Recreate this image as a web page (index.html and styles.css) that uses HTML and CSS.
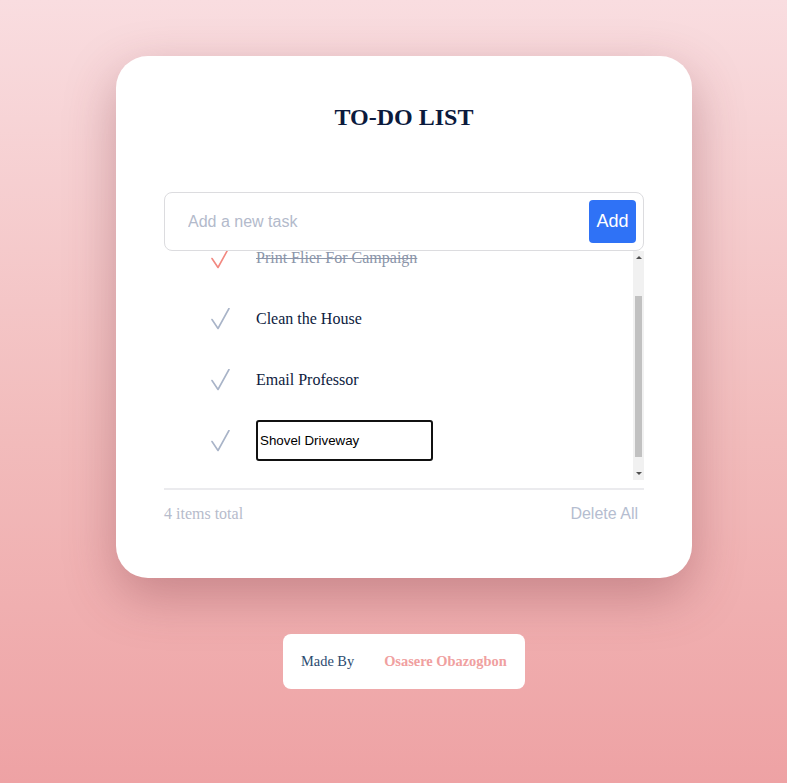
FILE: index.html
```html
<!DOCTYPE html>
<html lang="en">
<head>
<meta charset="utf-8">
<title>To-Do List</title>
<link rel="stylesheet" href="styles.css">
</head>
<body>
<div class="page">
  <main class="card">
    <h1 class="title">TO-DO LIST</h1>
    <form class="add-form">
      <input class="add-input" type="text" placeholder="Add a new task">
      <button class="add-btn" type="button">Add</button>
    </form>
    <div class="list-wrap">
      <ul class="list" id="list">
        <li class="item done">
          <svg class="check" width="20" height="22" viewBox="0 0 20 22"><path d="M2 11.5 L8 20.5 L19 0.5" fill="none" stroke-width="1.6" stroke-linecap="round" stroke-linejoin="round"/></svg>
          <span class="item-text">Print Flier For Campaign</span>
        </li>
        <li class="item">
          <svg class="check" width="20" height="22" viewBox="0 0 20 22"><path d="M2 11.5 L8 20.5 L19 0.5" fill="none" stroke-width="1.6" stroke-linecap="round" stroke-linejoin="round"/></svg>
          <span class="item-text">Clean the House</span>
        </li>
        <li class="item">
          <svg class="check" width="20" height="22" viewBox="0 0 20 22"><path d="M2 11.5 L8 20.5 L19 0.5" fill="none" stroke-width="1.6" stroke-linecap="round" stroke-linejoin="round"/></svg>
          <span class="item-text">Email Professor</span>
        </li>
        <li class="item">
          <svg class="check" width="20" height="22" viewBox="0 0 20 22"><path d="M2 11.5 L8 20.5 L19 0.5" fill="none" stroke-width="1.6" stroke-linecap="round" stroke-linejoin="round"/></svg>
          <input class="edit-input" type="text" value="Shovel Driveway">
        </li>
      </ul>
      <div class="scrollbar" aria-hidden="true">
        <div class="sb-btn"><span class="arrow-up"></span></div>
        <div class="sb-track"><div class="sb-thumb"></div></div>
        <div class="sb-btn"><span class="arrow-down"></span></div>
      </div>
    </div>
    <div class="footer">
      <span class="count">4 items total</span>
      <button class="delete-all" type="button">Delete All</button>
    </div>
  </main>
  <div class="credit">
    <span class="made">Made By</span>
    <span class="author">Osasere Obazogbon</span>
  </div>
</div>
<script src="script.js"></script>
</body>
</html>
```
FILE: styles.css
```css
html, body {
  margin: 0;
  padding: 0;
}
body {
  min-height: 783px;
  background: linear-gradient(180deg, #f9dde0 0%, #f2bcbc 55%, #eea2a4 100%);
  font-family: "Liberation Serif", "Times New Roman", serif;
}
.page {
  display: flex;
  flex-direction: column;
  align-items: center;
  padding: 56px 0 0 21px;
}
.card {
  width: 576px;
  height: 522px;
  box-sizing: border-box;
  padding: 47px 48px 0;
  background: #fff;
  border-radius: 32px;
  box-shadow: 0 18px 50px rgba(120, 50, 60, 0.35);
}
.title {
  margin: 0;
  text-align: center;
  font-size: 24px;
  line-height: 28px;
  font-weight: bold;
  color: #0b1a3d;
}
.add-form {
  margin: 61px 0 0;
  height: 59px;
  box-sizing: border-box;
  border: 1px solid #dcdcdf;
  border-radius: 8px;
  display: flex;
  align-items: center;
  padding: 0 7px 0 23px;
}
.add-input {
  flex: 1;
  border: none;
  outline: none;
  padding: 0;
  font-family: "Liberation Sans", Arial, sans-serif;
  font-size: 16px;
  color: #333;
  background: transparent;
}
.add-input::placeholder {
  color: #b3bacb;
}
.add-btn {
  width: 47px;
  height: 43px;
  border: none;
  border-radius: 4px;
  background: #2f72f6;
  color: #fff;
  font-family: "Liberation Sans", Arial, sans-serif;
  font-size: 18px;
  padding: 0;
}
.list-wrap {
  display: flex;
  height: 229px;
}
.list {
  flex: 1;
  list-style: none;
  margin: 0;
  padding: 20px 0 22px;
  height: 229px;
  box-sizing: border-box;
  overflow-y: scroll;
  scrollbar-width: none;
}
.list::-webkit-scrollbar {
  display: none;
}
.scrollbar {
  width: 11px;
  flex: none;
  display: flex;
  flex-direction: column;
  background: #f1f1f1;
}
.sb-btn {
  height: 14px;
  display: flex;
  align-items: center;
  justify-content: center;
}
.arrow-up {
  width: 0;
  height: 0;
  border-left: 3px solid transparent;
  border-right: 3px solid transparent;
  border-bottom: 3px solid #505050;
  margin-top: -1px;
}
.arrow-down {
  width: 0;
  height: 0;
  border-left: 3px solid transparent;
  border-right: 3px solid transparent;
  border-top: 3px solid #505050;
  margin-top: 1px;
}
.sb-track {
  flex: 1;
}
.sb-thumb {
  margin: 31px 2px 0;
  height: 161px;
  background: #c1c1c1;
}
.item {
  height: 61px;
  display: flex;
  align-items: center;
  padding-left: 46px;
}
.check {
  flex: none;
  stroke: #a9b4c8;
  margin-right: 26px;
  margin-top: 1px;
}
.item.done .check {
  stroke: #f28880;
}
.item-text {
  font-size: 16px;
  color: #0d1b3e;
}
.item.done .item-text {
  color: #8b95a9;
  text-decoration: line-through;
}
.edit-input {
  width: 177px;
  height: 41px;
  box-sizing: border-box;
  border: 2px solid #111;
  border-radius: 3px;
  padding: 0 2px;
  font-family: "Liberation Sans", Arial, sans-serif;
  font-size: 13.333px;
  color: #000;
  outline: none;
}
.footer {
  margin-top: 8px;
  border-top: 2px solid #ebebee;
  padding-top: 15px;
  display: flex;
  justify-content: space-between;
  align-items: center;
}
.count {
  font-size: 16px;
  line-height: 18px;
  color: #b6bbcb;
}
.delete-all {
  border: none;
  background: none;
  padding: 0 6px;
  font-family: "Liberation Sans", Arial, sans-serif;
  font-size: 16px;
  color: #b5bdd0;
}
.credit {
  margin-top: 56px;
  width: 242px;
  height: 55px;
  box-sizing: border-box;
  background: #fff;
  border-radius: 8px;
  display: flex;
  align-items: center;
  gap: 30px;
  padding: 0 0 0 18px;
  font-size: 14.4px;
  white-space: nowrap;
}
.made {
  flex: none;
  color: #2c4a70;
}
.author {
  flex: none;
  color: #f0a0a0;
  font-weight: bold;
}
```
FILE: script.js
```js
document.getElementById('list').scrollTop = 44;
```
